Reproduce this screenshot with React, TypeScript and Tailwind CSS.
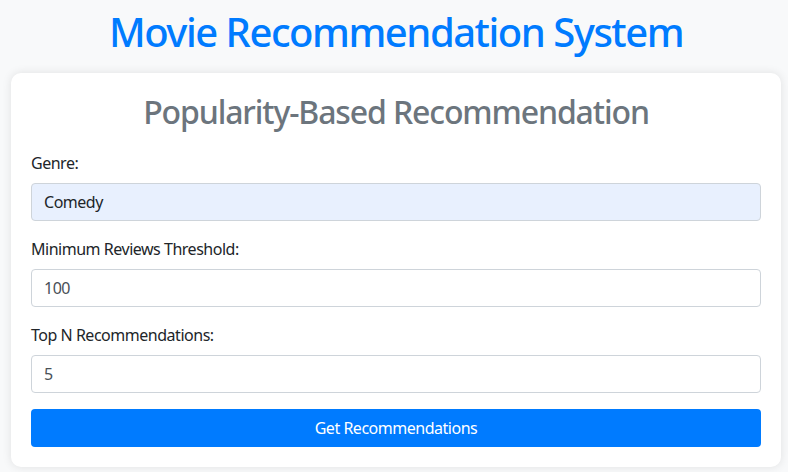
export default function App() {
  return (
    <div
      className="min-h-screen bg-[#f8f9fa] pt-[8px] pb-[5px] pl-[11px] pr-[7px] tracking-[-0.03em] text-[#212529]"
      style={{ fontFamily: '"Segoe UI", "Noto Sans", "Open Sans", sans-serif' }}
    >
      <h1 className="mb-[17px] text-center text-[40px] leading-[48px] font-medium tracking-[-0.037em] text-[#007bff]">
        Movie Recommendation System
      </h1>

      <div className="rounded-[10px] bg-white p-5 shadow-[0_0_10px_rgba(0,0,0,0.1)]">
        <h2 className="mb-5 text-center text-[32px] leading-[38px] font-medium tracking-[-0.035em] text-[#6c757d]">
          Popularity-Based Recommendation
        </h2>

        <form className="flex flex-col">
          <div className="mb-4">
            <label className="mb-2 block text-base leading-6">Genre:</label>
            <input
              className="block h-[38px] w-full rounded border border-[#ced4da] bg-[#e8f0fe] px-3 text-base tracking-[-0.03em] text-[#212529]"
              defaultValue="Comedy"
            />
          </div>
          <div className="mb-4">
            <label className="mb-2 block text-base leading-6">Minimum Reviews Threshold:</label>
            <input
              className="block h-[38px] w-full rounded border border-[#ced4da] bg-white px-3 text-base tracking-[-0.03em] text-[#495057]"
              defaultValue="100"
            />
          </div>
          <div className="mb-4">
            <label className="mb-2 block text-base leading-6">Top N Recommendations:</label>
            <input
              className="block h-[38px] w-full rounded border border-[#ced4da] bg-white px-3 text-base tracking-[-0.03em] text-[#495057]"
              defaultValue="5"
            />
          </div>
          <button
            type="button"
            className="h-[38px] w-full rounded bg-[#007bff] text-base tracking-[-0.03em] text-white"
          >
            Get Recommendations
          </button>
        </form>
      </div>
    </div>
  );
}
